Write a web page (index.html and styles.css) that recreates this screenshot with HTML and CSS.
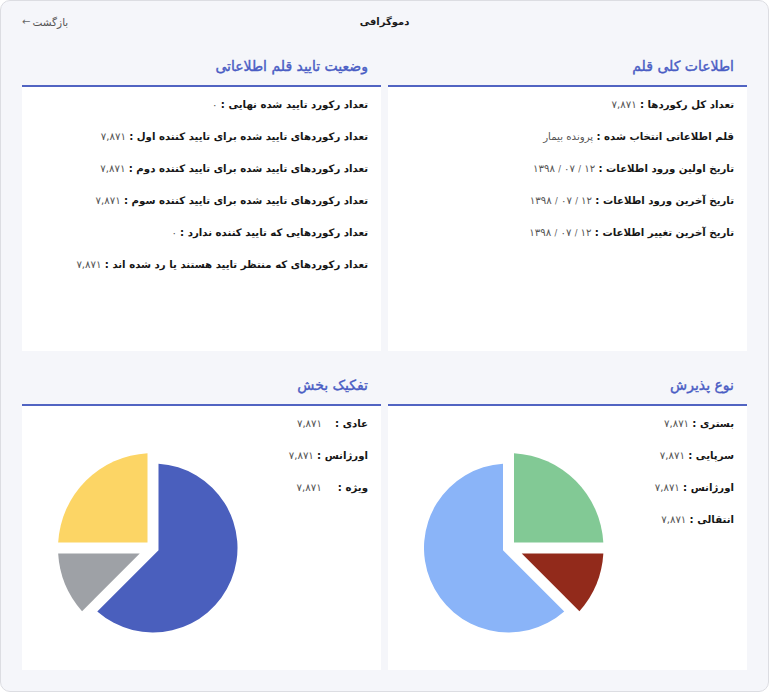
FILE: index.html
```html
<!DOCTYPE html>
<html lang="fa" dir="rtl">
<head>
<meta charset="utf-8">
<title>دموگرافی</title>
<link rel="stylesheet" href="styles.css">
</head>
<body>
<div class="modal">
  <header class="topbar">
    <span></span>
    <h1 class="page-title">دموگرافی</h1>
    <a class="back" href="#">بازگشت<span class="arrow">←</span></a>
  </header>

  <main class="grid">
    <section class="card">
      <h2 class="card-title">اطلاعات کلی قلم</h2>
      <div class="card-body">
        <ul class="stats">
          <li><b>تعداد کل رکوردها :</b> <span class="val">۷,۸۷۱</span></li>
          <li><b>قلم اطلاعاتی انتخاب شده :</b> <span class="val">پرونده بیمار</span></li>
          <li><b>تاریخ اولین ورود اطلاعات :</b> <span class="val">۱۲ <span class="sep">/</span> ۰۷ <span class="sep">/</span> ۱۳۹۸</span></li>
          <li><b>تاریخ آخرین ورود اطلاعات :</b> <span class="val">۱۲ <span class="sep">/</span> ۰۷ <span class="sep">/</span> ۱۳۹۸</span></li>
          <li><b>تاریخ آخرین تغییر اطلاعات :</b> <span class="val">۱۲ <span class="sep">/</span> ۰۷ <span class="sep">/</span> ۱۳۹۸</span></li>
        </ul>
      </div>
    </section>

    <section class="card">
      <h2 class="card-title">وضعیت تایید قلم اطلاعاتی</h2>
      <div class="card-body">
        <ul class="stats">
          <li><b>تعداد رکورد تایید شده نهایی :</b> <span class="val">۰</span></li>
          <li><b>تعداد رکوردهای تایید شده برای تایید کننده اول :</b> <span class="val">۷,۸۷۱</span></li>
          <li><b>تعداد رکوردهای تایید شده برای تایید کننده دوم :</b> <span class="val">۷,۸۷۱</span></li>
          <li><b>تعداد رکوردهای تایید شده برای تایید کننده سوم :</b> <span class="val">۷,۸۷۱</span></li>
          <li><b>تعداد رکوردهایی که تایید کننده ندارد :</b> <span class="val">۰</span></li>
          <li><b>تعداد رکوردهای که منتظر تایید هستند یا رد شده اند :</b> <span class="val">۷,۸۷۱</span></li>
        </ul>
      </div>
    </section>

    <section class="card">
      <h2 class="card-title">نوع پذیرش</h2>
      <div class="card-body split">
        <ul class="stats legend">
          <li><b>بستری :</b> <span class="val">۷,۸۷۱</span></li>
          <li><b>سرپایی :</b> <span class="val">۷,۸۷۱</span></li>
          <li><b>اورژانس :</b> <span class="val">۷,۸۷۱</span></li>
          <li><b>انتقالی :</b> <span class="val">۷,۸۷۱</span></li>
        </ul>
        <div class="chart">
          <svg class="pie" width="180" height="180" viewBox="15.5 5 180 180" aria-hidden="true">
            <path class="s-green" d="M105.5,94.5 L105.5,5.16 A95,95 0 0 1 194.84,94.5 Z"/>
            <path class="s-red" d="M113.28,105.5 L194.84,105.5 A95,95 0 0 1 170.95,163.17 Z"/>
            <path class="s-blue" d="M94.5,102.28 L155.73,163.51 A84.5,84.5 0 1 1 94.5,15.68 Z"/>
          </svg>
        </div>
      </div>
    </section>

    <section class="card">
      <h2 class="card-title">تفکیک بخش</h2>
      <div class="card-body split">
        <ul class="stats legend">
          <li><b>عادی :</b>&nbsp;&nbsp;&nbsp; <span class="val">۷,۸۷۱</span></li>
          <li><b>اورژانس :</b> <span class="val">۷,۸۷۱</span></li>
          <li><b>ویژه :</b>&nbsp;&nbsp;&nbsp;&nbsp; <span class="val">۷,۸۷۱</span></li>
        </ul>
        <div class="chart">
          <svg class="pie" width="180" height="180" viewBox="5 5 180 180" aria-hidden="true">
            <g transform="translate(200,0) scale(-1,1)">
              <path class="s-yellow" d="M105.5,94.5 L105.5,5.16 A95,95 0 0 1 194.84,94.5 Z"/>
              <path class="s-gray" d="M113.28,105.5 L194.84,105.5 A95,95 0 0 1 170.95,163.17 Z"/>
              <path class="s-indigo" d="M94.5,102.28 L155.73,163.51 A84.5,84.5 0 1 1 94.5,15.68 Z"/>
            </g>
          </svg>
        </div>
      </div>
    </section>
  </main>
</div>
</body>
</html>
```

FILE: styles.css
```css
html, body {
  margin: 0;
  padding: 0;
  background: #ffffff;
}

body {
  font-family: "DejaVu Sans", sans-serif;
  color: #222;
}

.modal {
  width: 769px;
  height: 692px;
  box-sizing: border-box;
  border: 1px solid #dcdde2;
  border-radius: 10px;
  background: #f5f6fa;
  padding: 0 21px;
  overflow: hidden;
}

.topbar {
  height: 41px;
  display: grid;
  grid-template-columns: 1fr auto 1fr;
  align-items: center;
}

.page-title {
  margin: 0;
  font-size: 10px;
  font-weight: bold;
  color: #1a1a1a;
}

.back {
  justify-self: end;
  font-size: 10.5px;
  color: #555;
  text-decoration: none;
  display: flex;
  align-items: center;
  gap: 2px;
}

.arrow {
  font-size: 10px;
  color: #666;
}

.grid {
  display: grid;
  grid-template-columns: 359px 359px;
  grid-template-rows: 309px 309px;
  column-gap: 7px;
  row-gap: 10px;
}

.card {
  display: flex;
  flex-direction: column;
}

.card-title {
  margin: 0;
  height: 43px;
  box-sizing: border-box;
  padding: 13px 13px 8px;
  line-height: 22px;
  font-size: 14px;
  font-weight: normal;
  color: #4a5dc4;
  -webkit-text-stroke: 0.4px #4a5dc4;
}

.card-body {
  flex: 1;
  background: #fff;
  border-top: 2px solid #5164c2;
  padding: 2px 13px 0;
}

.stats {
  list-style: none;
  margin: 0;
  padding: 0;
}

.stats li {
  height: 32px;
  line-height: 32px;
  font-size: 10.2px;
  white-space: nowrap;
}

.stats b {
  font-weight: bold;
  color: #161616;
}

.val {
  color: #555;
}

.sep {
  font-size: 8px;
}

.split {
  display: flex;
  align-items: flex-start;
  padding-left: 0;
}

.legend {
  flex: 1;
}

.chart {
  margin-top: 45px;
  margin-left: 36px;
}

.pie {
  display: block;
}

.s-green { fill: #82c995; }
.s-red { fill: #922a1b; }
.s-blue { fill: #8ab4f8; }
.s-yellow { fill: #fcd565; }
.s-gray { fill: #9ea1a6; }
.s-indigo { fill: #4a5fbd; }
```
